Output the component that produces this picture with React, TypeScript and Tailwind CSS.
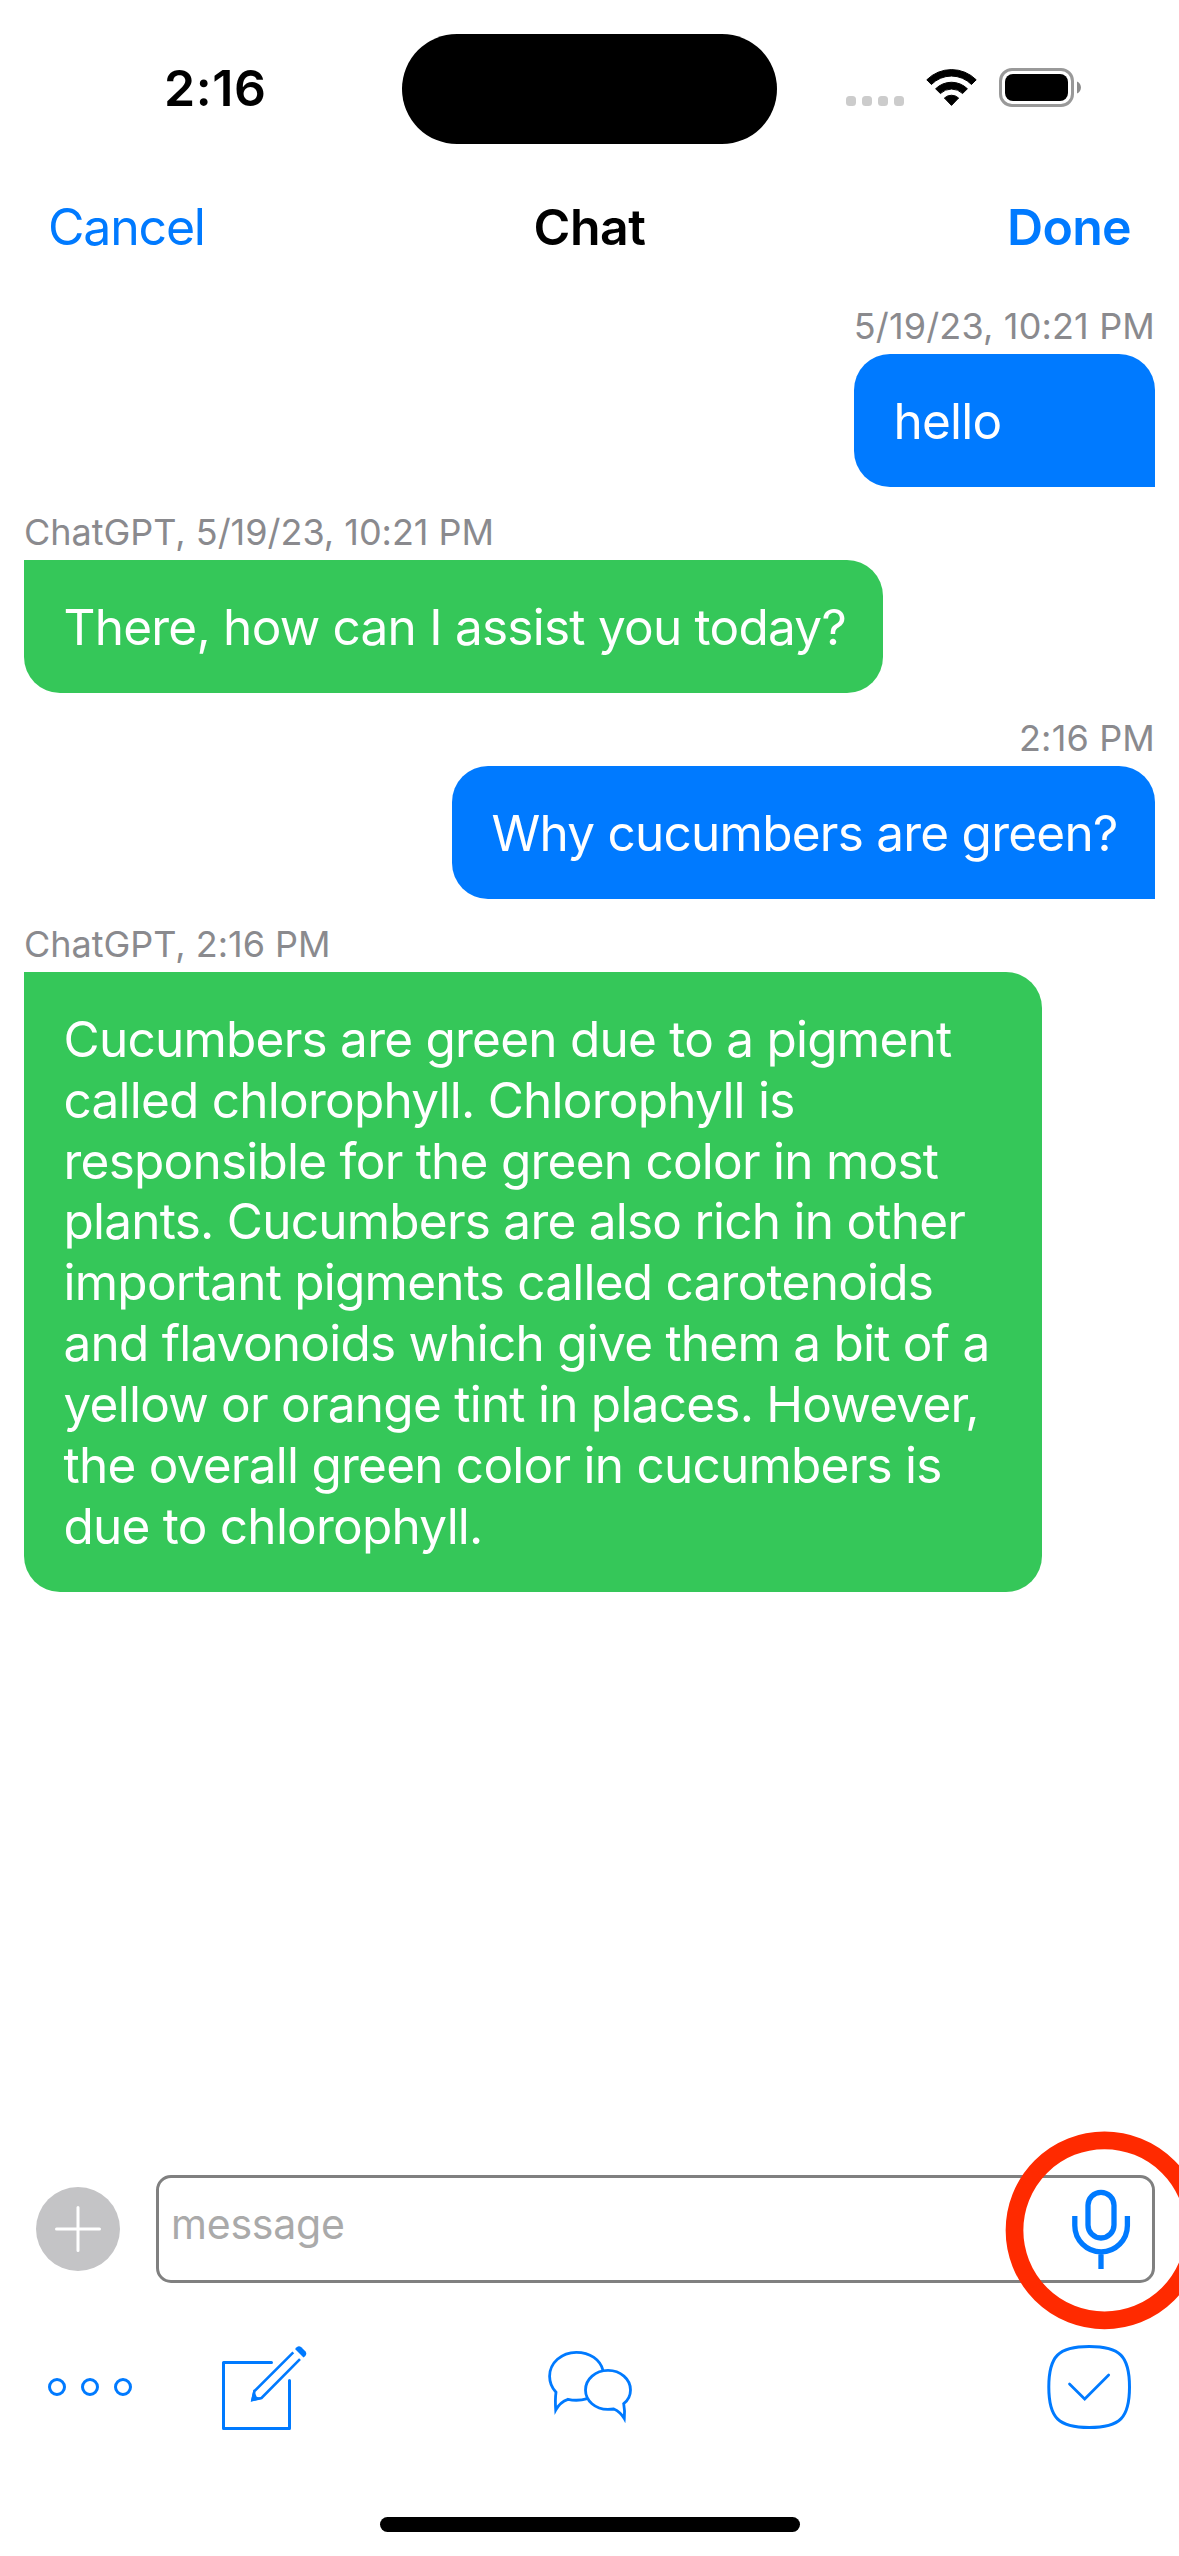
import React from "react";

type Message = {
  label: string;
  lines: string[];
  mine?: boolean;
  width: string;
};

const messages: Message[] = [
  {
    label: "5/19/23, 10:21 PM",
    lines: ["hello"],
    mine: true,
    width: "w-[301px]",
  },
  {
    label: "ChatGPT, 5/19/23, 10:21 PM",
    lines: ["There, how can I assist you today?"],
    width: "w-[859px]",
  },
  {
    label: "2:16 PM",
    lines: ["Why cucumbers are green?"],
    mine: true,
    width: "w-[703px]",
  },
  {
    label: "ChatGPT, 2:16 PM",
    lines: [
      "Cucumbers are green due to a pigment",
      "called chlorophyll. Chlorophyll is",
      "responsible for the green color in most",
      "plants. Cucumbers are also rich in other",
      "important pigments called carotenoids",
      "and flavonoids which give them a bit of a",
      "yellow or orange tint in places. However,",
      "the overall green color in cucumbers is",
      "due to chlorophyll.",
    ],
    width: "w-[1018px]",
  },
];

const StatusBar = () => (
  <div className="flex h-[162px] items-start">
    <div className="w-[402px] pt-[57px] pl-[164px] text-[50px] leading-[62px] font-semibold tracking-[0.6px]">
      2:16
    </div>
    <div className="mt-[34px] h-[110px] w-[375px] rounded-full bg-black" />
    <svg
      className="mt-[60px] ml-[63px]"
      width="250"
      height="56"
      viewBox="840 60 250 56"
    >
      {/* Signal */}
      <g fill="#cccccc">
        <rect x="846" y="96" width="10" height="10" rx="3.5" />
        <rect x="862" y="96" width="10" height="10" rx="3.5" />
        <rect x="878" y="96" width="10" height="10" rx="3.5" />
        <rect x="894" y="96" width="10" height="10" rx="3.5" />
      </g>
      {/* Wi-Fi */}
      <path d="M926.8 79.8a35 35 0 0 1 49.4 0l-4.7 4.7a28 28 0 0 0-40.1 0z" fill="black" stroke="black" strokeWidth="1" strokeLinejoin="round" />
      <path d="M935.6 88.8a22.6 22.6 0 0 1 31.8 0l-4.8 4.7a16 16 0 0 0-22.2 0z" fill="black" stroke="black" strokeWidth="1" strokeLinejoin="round" />
      <path d="M944.4 98a10.5 10.5 0 0 1 14.2 0l-7.1 7.4z" fill="black" stroke="black" strokeWidth="1" strokeLinejoin="round" />
      {/* Battery */}
      <rect x="1000.5" y="69.5" width="72" height="36" rx="11.5" fill="none" stroke="#999999" strokeWidth="3" />
      <rect x="1005" y="74" width="63" height="27" rx="8" fill="black" />
      <path d="M1077 81.5c5.3 2 5.3 10 0 12z" fill="#8c8c8c" />
    </svg>
  </div>
);

const Bubble = ({ label, lines, mine, width }: Message) => (
  <div className={mine ? "flex flex-col items-end" : "flex flex-col items-start"}>
    <div
      className={`${
        mine ? "tracking-[0.15px]" : "tracking-[-0.02px]"
      } mb-[6px] text-[36px] leading-[43px] text-[#8a8a8e] whitespace-nowrap`}
    >
      {label}
    </div>
    <div
      className={`${width} ${
        mine
          ? "rounded-t-[36px] rounded-bl-[36px] bg-[#007aff]"
          : "rounded-b-[36px] rounded-tr-[36px] bg-[#35c759]"
      } pt-[37px] pb-[35px] pl-[39.5px] text-[49.5px] leading-[60.9px] tracking-[-0.76px] text-white whitespace-nowrap`}
    >
      {lines.map((line) => (
        <p key={line}>{line}</p>
      ))}
    </div>
  </div>
);

const MicIcon = () => (
  <svg width="60" height="84" viewBox="1071 2187 60 84" fill="none" stroke="#007aff" strokeWidth="5.3">
    <rect x="1088" y="2192.3" width="26" height="45.7" rx="13" />
    <path d="M1074.8 2216v9.5a26.3 26.3 0 0 0 52.6 0V2216M1101 2252v17" />
  </svg>
);

const App = () => {
  return (
    <div className="flex h-[2556px] w-[1179px] flex-col overflow-hidden bg-white font-[Inter,sans-serif] text-black">
      <StatusBar />

      {/* Navigation */}
      <header className="grid h-[132px] grid-cols-3 items-center px-[48px] pb-[3px] text-[50px] leading-[62px]">
        <button className="text-left tracking-[-1.2px] text-[#007aff]">Cancel</button>
        <h1 className="text-center font-semibold tracking-[-0.5px]">Chat</h1>
        <button className="text-right font-semibold tracking-[-0.7px] text-[#007aff]">Done</button>
      </header>

      {/* Messages */}
      <main className="flex flex-1 flex-col gap-[24px] px-[24px] pt-[11px]">
        {messages.map((message) => (
          <Bubble key={message.label} {...message} />
        ))}
      </main>

      {/* Composer */}
      <div className="flex items-center pr-[24px] pl-[36px]">
        <svg width="84" height="84" viewBox="0 0 84 84">
          <circle cx="42" cy="42" r="42" fill="#c4c4c6" />
          <path d="M42 20.5v43M20.5 42h43" stroke="white" strokeWidth="3" strokeLinecap="round" />
        </svg>
        <div className="relative ml-[36px] flex h-[108px] flex-1 items-center justify-between rounded-[15px] border-[3px] border-[#808080] pr-[21px] pl-[12px]">
          <span className="pb-[10px] text-[41px] leading-[50px] tracking-[-0.2px] text-[#aaaaaa]">message</span>
          <MicIcon />
          <svg
            className="absolute top-[-50px] left-[844px]"
            width="204"
            height="204"
            viewBox="0 0 204 204"
          >
            <circle cx="101.500" cy="102.300" r="90" fill="none" stroke="#ff2a00" strokeWidth="17.7" />
          </svg>
        </div>
      </div>

      {/* Toolbar */}
      <div className="flex h-[234px] items-start pt-[60px] pl-[48px]">
        <svg width="84" height="90" viewBox="48 2343 84 90" fill="none" stroke="#007aff" strokeWidth="3">
          <circle cx="57" cy="2387" r="7.5" />
          <circle cx="90" cy="2387" r="7.5" />
          <circle cx="123" cy="2387" r="7.5" />
        </svg>
        <svg className="ml-[87px]" width="90" height="90" viewBox="219 2343 90 90" fill="none" stroke="#007aff" strokeWidth="3">
          <path d="M271.5 2362.5h-48v66h66v-48" strokeLinecap="round" strokeLinejoin="round" />
          <path d="M293.3 2352.3l-38.8 38.7-2 9 9-2 38.5-38.9" strokeWidth="2.6" />
          <path d="M253.5 2389.500l-2.700 12 11.700-2.800-5.800-2z" fill="#007aff" stroke="none" />
          <path d="M295 2349l1.700-1.700q2.300-2 4.600 0l4 4q2 2.300 0 4.600l-1.800 1.600z" fill="#007aff" stroke="none" />
        </svg>
        <svg className="ml-[237px]" width="90" height="90" viewBox="546 2343 90 90" fill="none" stroke="#007aff" strokeWidth="2.8">
          <path d="M603 2370.5C600.5 2360 590 2352.3 576.3 2352.3C561.5 2352.3 549.6 2363 549.6 2376.3C549.6 2382.5 552 2388 556 2392.3Q555 2399 555.7 2410Q560 2402 568 2399.3Q577.5 2401.5 587.3 2398.6" />
          <path d="M613.8 2409C611.8 2409.3 609.8 2409.4 607.8 2409.4C595.3 2409.4 585.5 2400.7 585.5 2390C585.5 2379.2 595.5 2370.4 608 2370.4C620.5 2370.4 630.5 2379.2 630.5 2390C630.5 2395.5 628 2400.3 623.7 2403.7Q625 2410 624.3 2418.6Q620.5 2412 613.8 2409z" />
        </svg>
        <svg className="ml-[409px]" width="90" height="90" viewBox="1045 2343 90 90" fill="none" stroke="#007aff" strokeWidth="3">
          <path d="M1089.2 2346.5C1120 2346.5 1129.5 2356 1129.5 2387C1129.5 2418 1120 2427.5 1089.2 2427.5C1058.5 2427.5 1048.8 2418 1048.8 2387C1048.8 2356 1058.5 2346.5 1089.2 2346.5z" />
          <path d="M1069.5 2384l15.2 15 24-24" strokeWidth="2.7" strokeLinecap="round" />
        </svg>
      </div>

      {/* Home indicator */}
      <div className="mb-[24px] h-[15px] w-[420px] self-center rounded-full bg-black" />
    </div>
  );
};

export default App;
